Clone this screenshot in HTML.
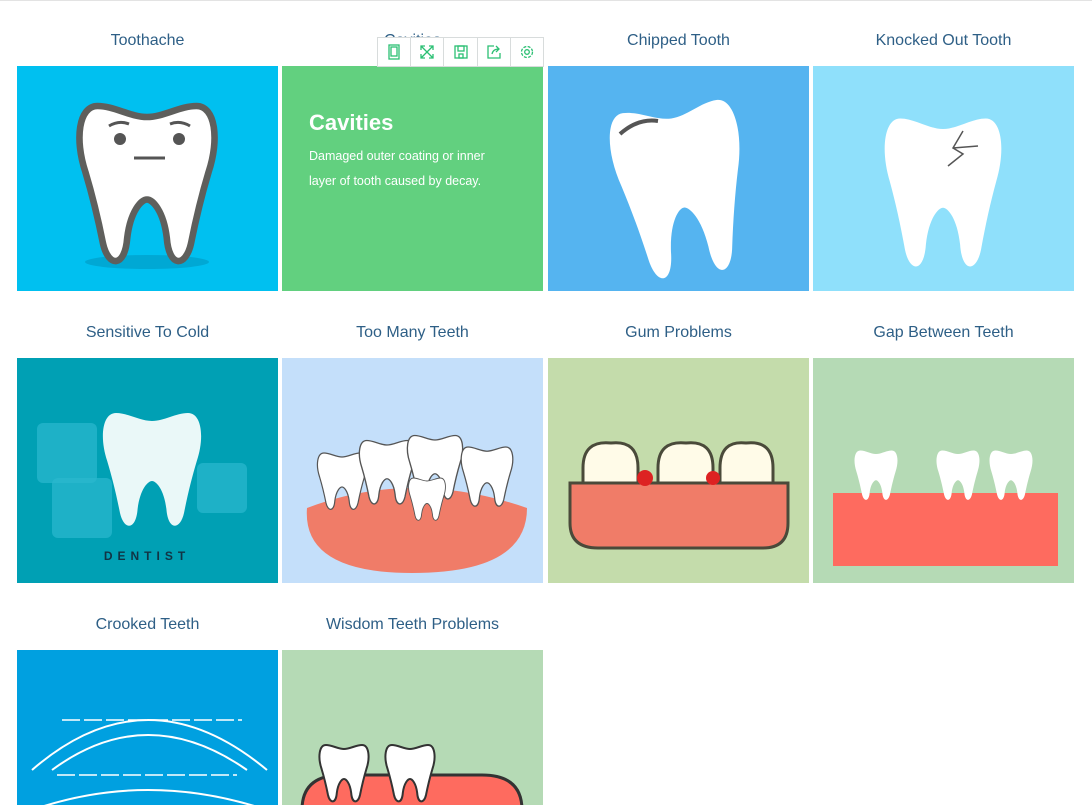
<!DOCTYPE html>
<html><head><meta charset="utf-8"><style>
html,body{margin:0;width:1092px;height:805px;overflow:hidden}
body{background:#fff;font-family:"Liberation Sans",sans-serif;position:relative}
.top{position:absolute;left:0;top:0;width:1092px;height:1px;background:#e3e3e3}
.t{position:absolute;width:261px;text-align:center;color:#2e5f86;font-size:16px}
.c{position:absolute;width:261px;height:225px;overflow:hidden}
.c svg{width:261px;height:225px;display:block}
.tb{position:absolute;left:377px;top:37px;width:165px;height:28px;border:1px solid #d8dcdc;background:#fff;display:flex}
.tb div{flex:1;border-right:1px solid #d8dcdc;display:flex;align-items:center;justify-content:center}
.tb div:last-child{border-right:none}
</style></head><body>
<div class="top"></div>
<svg width="0" height="0" style="position:absolute"><defs>
<path id="tooth" d="M-45,-50 C-62,-50 -66,-20 -56,10 C-50,30 -45,50 -40,75 C-35,97 -20,97 -18,70 C-15,45 -5,35 0,35 C5,35 15,45 18,70 C20,97 35,97 40,75 C45,50 50,30 56,10 C66,-20 62,-50 45,-50 C30,-50 15,-40 0,-40 C-15,-40 -30,-50 -45,-50Z"/>
</defs></svg>

<div class="t" style="left:17px;top:32px">Toothache</div>
<div class="t" style="left:282px;top:32px">Cavities</div>
<div class="t" style="left:548px;top:32px">Chipped Tooth</div>
<div class="t" style="left:813px;top:32px">Knocked Out Tooth</div>
<div class="t" style="left:17px;top:324px">Sensitive To Cold</div>
<div class="t" style="left:282px;top:324px">Too Many Teeth</div>
<div class="t" style="left:548px;top:324px">Gum Problems</div>
<div class="t" style="left:813px;top:324px">Gap Between Teeth</div>
<div class="t" style="left:17px;top:616px">Crooked Teeth</div>
<div class="t" style="left:282px;top:616px">Wisdom Teeth Problems</div>

<div class="c" style="left:17px;top:66px;background:#00c0f0"><svg>
<ellipse cx="130" cy="196" rx="62" ry="7" fill="#00a8d4"/>
<use href="#tooth" transform="translate(130,95) scale(1.1)" fill="#fff" stroke="#5f5f5c" stroke-width="6"/>
<circle cx="103" cy="73" r="6" fill="#555"/><circle cx="162" cy="73" r="6" fill="#555"/>
<path d="M92,60 Q102,54 112,58 M153,58 Q163,54 173,60 M117,92 H148" stroke="#555" stroke-width="3" fill="none"/>
</svg></div>

<div class="c" style="left:282px;top:66px;background:#62d07f;color:#fff">
<div style="position:absolute;left:27px;top:44px;font-size:22px;font-weight:bold">Cavities</div>
<div style="position:absolute;left:27px;top:78px;font-size:12.5px;line-height:25px;width:195px">Damaged outer coating or inner layer of tooth caused by decay.</div>
</div>

<div class="c" style="left:548px;top:66px;background:#55b4f0"><svg>
<use href="#tooth" transform="translate(130,100) rotate(-8) scale(1.05,1.2)" fill="#fff"/>
<path d="M72,68 Q90,52 110,55" stroke="#555" stroke-width="4" fill="none"/>
</svg></div>

<div class="c" style="left:813px;top:66px;background:#8fe0fb"><svg>
<use href="#tooth" transform="translate(130,105) scale(0.95,1.05)" fill="#fff"/>
<path d="M150,65 L140,82 L150,88 L135,100 M140,82 L165,80" stroke="#555" stroke-width="1.5" fill="none"/>
</svg></div>

<div class="c" style="left:17px;top:358px;background:#00a0b4"><svg>
<rect x="20" y="65" width="60" height="60" rx="6" fill="#2bb8cf" opacity=".7"/>
<rect x="35" y="120" width="60" height="60" rx="6" fill="#2bb8cf" opacity=".7"/>
<rect x="180" y="105" width="50" height="50" rx="6" fill="#2bb8cf" opacity=".7"/>
<use href="#tooth" transform="translate(135,95) scale(0.8)" fill="#eaf8f8"/>
<text x="130" y="202" text-anchor="middle" font-size="12" fill="#134" font-weight="bold" letter-spacing="5">DENTIST</text>
</svg></div>

<div class="c" style="left:282px;top:358px;background:#c4dffa"><svg>
<path d="M25,150 Q130,110 245,150 Q245,215 130,215 Q20,215 25,150Z" fill="#f07c68"/>
<use href="#tooth" transform="translate(60,115) scale(0.4)" fill="#fff" stroke="#555" stroke-width="3"/>
<use href="#tooth" transform="translate(105,105) scale(0.45)" fill="#fff" stroke="#555" stroke-width="3"/>
<use href="#tooth" transform="translate(153,100) scale(0.45)" fill="#fff" stroke="#555" stroke-width="3"/>
<use href="#tooth" transform="translate(205,110) scale(0.42)" fill="#fff" stroke="#555" stroke-width="3"/>
<use href="#tooth" transform="translate(145,135) scale(0.3)" fill="#fff" stroke="#555" stroke-width="3"/>
</svg></div>

<div class="c" style="left:548px;top:358px;background:#c4dcab"><svg>
<path d="M22,125 H240 V165 Q240,190 215,190 H50 Q22,190 22,165Z" fill="#f07c68" stroke="#4a4a3a" stroke-width="3"/>
<path d="M35,110 Q35,82 63,85 Q90,82 90,110 V125 H35Z M110,110 Q110,82 138,85 Q165,82 165,110 V125 H110Z M172,110 Q172,82 198,85 Q225,82 225,110 V125 H172Z" fill="#fffbe8" stroke="#4a4a3a" stroke-width="3"/>
<circle cx="97" cy="120" r="8" fill="#d22"/><circle cx="165" cy="120" r="7" fill="#d22"/>
</svg></div>

<div class="c" style="left:813px;top:358px;background:#b5dab5"><svg>
<rect x="20" y="135" width="225" height="73" fill="#fe6b5f"/>
<use href="#tooth" transform="translate(63,110) scale(0.35)" fill="#fff"/>
<use href="#tooth" transform="translate(145,110) scale(0.35)" fill="#fff"/>
<use href="#tooth" transform="translate(198,110) scale(0.35)" fill="#fff"/>
</svg></div>

<div class="c" style="left:17px;top:650px;height:155px;background:#00a0e0"><svg>
<path d="M15,120 Q130,20 250,120 M35,120 Q130,50 230,120 M15,160 Q130,120 250,160" stroke="#fff" stroke-width="2" fill="none"/>
<path d="M45,70 h180 M40,125 h180" stroke="#fff" stroke-width="1.5" stroke-dasharray="18 4" fill="none"/>
</svg></div>

<div class="c" style="left:282px;top:650px;height:155px;background:#b5dab5"><svg>
<path d="M20,160 Q20,125 60,125 H200 Q240,125 240,160 V225 H20Z" fill="#fe6b5f" stroke="#333" stroke-width="3"/>
<use href="#tooth" transform="translate(62,115) scale(0.4)" fill="#fff" stroke="#333" stroke-width="5"/>
<use href="#tooth" transform="translate(128,115) scale(0.4)" fill="#fff" stroke="#333" stroke-width="5"/>
</svg></div>

<div class="tb">
<div><svg width="14" height="16" fill="none" stroke="#2bbf73" stroke-width="1.3"><rect x="2" y="1" width="10" height="14"/><rect x="4" y="3" width="6" height="9"/></svg></div>
<div><svg width="16" height="16" fill="none" stroke="#2bbf73" stroke-width="1.3"><path d="M2,2 L14,14 M14,2 L2,14 M2,6 V2 H6 M10,2 H14 V6 M14,10 V14 H10 M6,14 H2 V10"/></svg></div>
<div><svg width="16" height="16" fill="none" stroke="#2bbf73" stroke-width="1.3"><rect x="2" y="2" width="12" height="12"/><rect x="5" y="2" width="6" height="5"/><rect x="6" y="10" width="4" height="4"/></svg></div>
<div><svg width="16" height="16" fill="none" stroke="#2bbf73" stroke-width="1.3"><path d="M8,2 H2 V14 H14 V9 M6,10 Q7,5 13,5 M10,2 L13,5 L10,8"/></svg></div>
<div><svg width="16" height="16" fill="none" stroke="#2bbf73" stroke-width="1.3"><circle cx="8" cy="8" r="2.3"/><circle cx="8" cy="8" r="5.5" stroke-dasharray="3 1.4"/></svg></div>
</div>
</body></html>
